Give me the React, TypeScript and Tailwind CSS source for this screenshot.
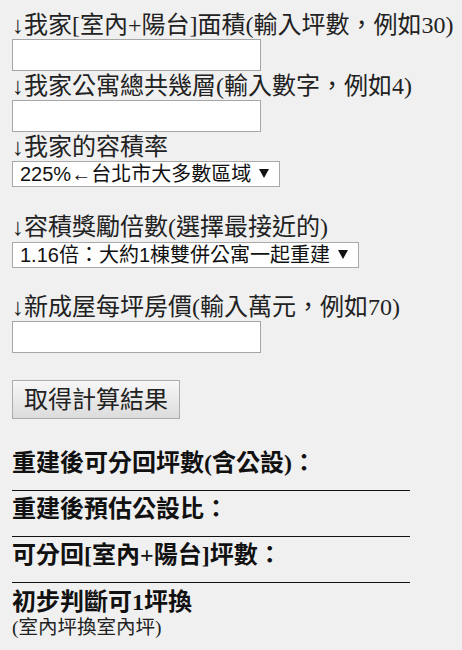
import { useState } from "react";

const serif = "font-['Liberation_Serif','Noto_Sans_CJK_TC',serif]";
const sans = "font-['Liberation_Sans','Noto_Sans_CJK_TC',sans-serif]";

const labelCls = `block text-[24px] leading-[28px] text-[#222] whitespace-nowrap ${serif}`;
const inputCls =
  "block h-[32px] w-[249px] border border-[#a6a6a6] bg-white px-1 text-[20px] outline-none";
const resultCls = `block text-[24px] leading-[28px] font-bold text-[#111] whitespace-nowrap ${serif}`;

function Arrow() {
  return (
    <svg width="10" height="9" viewBox="0 0 10 9" className="pointer-events-none absolute right-[11px] top-[8px]">
      <polygon points="0,0 10,0 5,9" fill="#111" />
    </svg>
  );
}

function Picker({ options, width }: { options: string[]; width: string }) {
  const [value, setValue] = useState(options[0]);
  return (
    <div className={`relative ${width}`}>
      <select
        value={value}
        onChange={(e) => setValue(e.target.value)}
        className={`block h-[26px] w-full appearance-none border border-[#a9a9a9] bg-white pl-[7px] pr-6 text-[20px] leading-[24px] text-[#111] outline-none ${sans}`}
      >
        {options.map((o) => (
          <option key={o}>{o}</option>
        ))}
      </select>
      <Arrow />
    </div>
  );
}

export default function App() {
  return (
    <div className="min-h-[650px] bg-[#f0f0f0] pl-[12px] pt-[11px]">
      <label className={labelCls}>↓我家[室內+陽台]面積(輸入坪數，例如30)</label>
      <input type="text" className={inputCls} />

      <label className={`${labelCls} mt-[1px]`}>↓我家公寓總共幾層(輸入數字，例如4)</label>
      <input type="text" className={inputCls} />

      <label className={`${labelCls} mt-[1px]`}>↓我家的容積率</label>
      <Picker
        width="w-[268px]"
        options={["225%←台北市大多數區域", "300%", "400%"]}
      />

      <label className={`${labelCls} mt-[26px]`}>↓容積獎勵倍數(選擇最接近的)</label>
      <div className="mt-[1px]">
        <Picker
          width="w-[347px]"
          options={["1.16倍：大約1棟雙併公寓一起重建", "1.3倍", "1.5倍"]}
        />
      </div>

      <label className={`${labelCls} mt-[25px]`}>↓新成屋每坪房價(輸入萬元，例如70)</label>
      <input type="text" className={inputCls} />

      <button
        type="button"
        className={`mt-[27px] block h-[39px] w-[168px] border border-[#acacac] bg-gradient-to-b from-[#f7f7f7] to-[#dcdcdc] text-[24px] leading-[28px] text-[#222] ${sans}`}
      >
        取得計算結果
      </button>

      <div className="mt-[30px] w-[398px]">
        <b className={resultCls}>重建後可分回坪數(含公設)：</b>
        <div className="h-[14px] border-b border-[#111]" />
        <b className={`${resultCls} mt-[4px]`}>重建後預估公設比：</b>
        <div className="h-[14px] border-b border-[#111]" />
        <b className={`${resultCls} mt-[4px]`}>可分回[室內+陽台]坪數：</b>
        <div className="h-[14px] border-b border-[#111]" />
        <b className={`${resultCls} mt-[5px]`}>初步判斷可1坪換</b>
        <p className={`mt-[1px] text-[19.5px] leading-[22px] text-[#222] ${serif}`}>(室內坪換室內坪)</p>
      </div>
    </div>
  );
}
